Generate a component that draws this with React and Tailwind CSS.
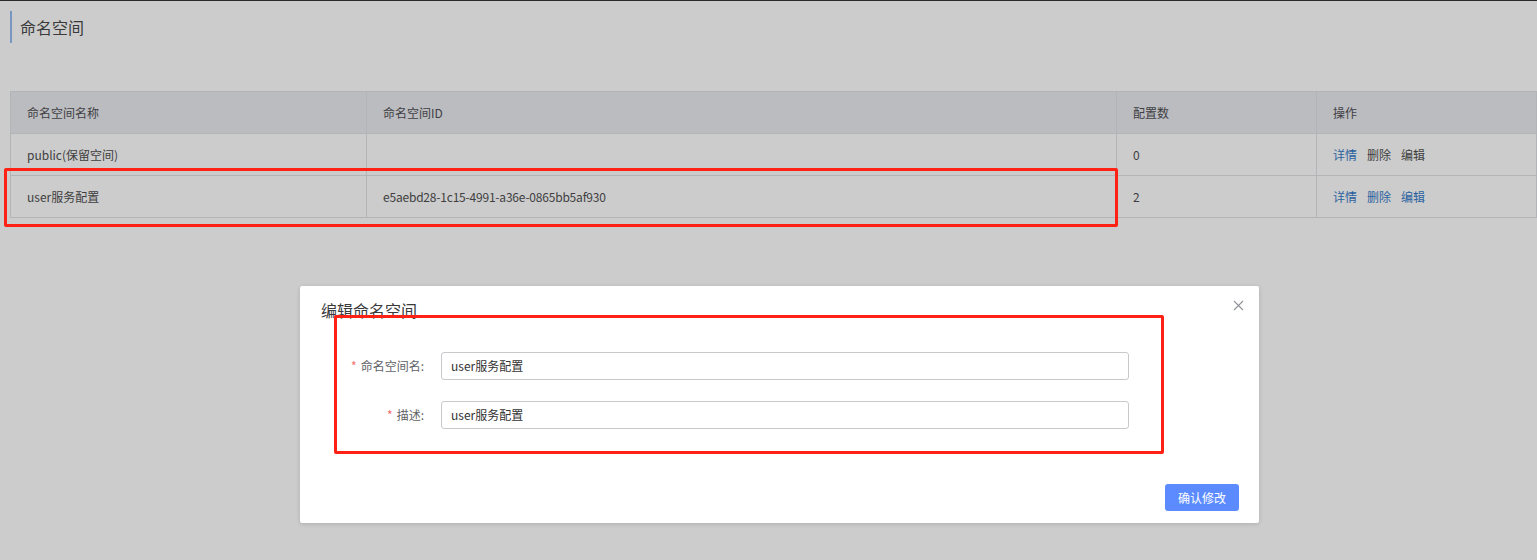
import React from 'react'
import { X } from 'lucide-react'

const rows = [
  { name: 'public(保留空间)', id: '', count: '0', dim: true },
  { name: 'user服务配置', id: 'e5aebd28-1c15-4991-a36e-0865bb5af930', count: '2', dim: false },
]

export default function App() {
  return (
    <div
      className="relative h-[560px] w-full overflow-hidden border-t border-[#2a2a2e] bg-[#cccccc] text-[12px] text-[#3e3e40]"
      style={{ fontFamily: '"Noto Sans CJK SC", "Noto Sans", sans-serif' }}
    >
      {/* page header */}
      <div className="pl-[10px] pt-[10px]">
        <div className="flex h-[32px] items-center border-l-[2px] border-[#7896bf] pl-[8px] text-[16px] text-[#3a3a3c]">
          命名空间
        </div>
      </div>

      {/* table */}
      <div className="ml-[10px] mt-[48px] w-[1527px]">
        <table className="w-full table-fixed border-collapse">
          <colgroup>
            <col className="w-[356px]" />
            <col className="w-[750px]" />
            <col className="w-[200px]" />
            <col />
          </colgroup>
          <thead>
            <tr className="h-[42px] bg-[#bbbcc0]">
              {['命名空间名称', '命名空间ID', '配置数', '操作'].map((h) => (
                <th key={h} className="border border-[#b3b4b8] pl-[16px] text-left font-normal text-[#404044]">
                  {h}
                </th>
              ))}
            </tr>
          </thead>
          <tbody>
            {rows.map((r) => (
              <tr key={r.name} className="h-[42px]">
                <td className="border border-[#b3b4b8] pl-[16px]">{r.name}</td>
                <td className="border border-[#b3b4b8] pl-[16px] tracking-[-0.2px]">{r.id}</td>
                <td className="border border-[#b3b4b8] pl-[16px]">{r.count}</td>
                <td className="border border-[#b3b4b8] pl-[16px]">
                  <div className="flex gap-[10px]">
                    <span className="text-[#2a62a0]">详情</span>
                    <span className={r.dim ? 'text-[#3e3e40]' : 'text-[#2a62a0]'}>删除</span>
                    <span className={r.dim ? 'text-[#3e3e40]' : 'text-[#2a62a0]'}>编辑</span>
                  </div>
                </td>
              </tr>
            ))}
          </tbody>
        </table>
      </div>

      {/* annotation on row */}
      <div className="pointer-events-none absolute left-[4px] top-[167px] h-[59px] w-[1114px] rounded-[2px] border-[3px] border-[#ff2114]" />

      {/* modal */}
      <div className="absolute left-[300px] top-[285px] flex h-[237px] w-[959px] flex-col rounded-[2px] bg-white shadow-[0_1px_4px_rgba(0,0,0,0.15)]">
        <div className="flex items-start justify-between pl-[21px] pr-[12px] pt-[12px]">
          <span className="text-[16px] leading-[24px] text-[#3a3a3c]">编辑命名空间</span>
          <X className="-mt-[1px] h-[17px] w-[17px] text-[#909399]" strokeWidth={1.5} />
        </div>
        <div className="mt-[30px] flex flex-col gap-[21px]">
          {[
            ['命名空间名', 'user服务配置'],
            ['描述', 'user服务配置'],
          ].map(([label, val]) => (
            <div key={label} className="flex items-center">
              <label className="w-[141px] pr-[17px] text-right text-[12px] text-[#606266]">
                <span className="mr-[4px] text-[#f56c6c]">*</span>
                {label}:
              </label>
              <div className="flex h-[28px] w-[688px] items-center rounded-[3px] border border-[#c8c9cc] pl-[9px] text-[12px] text-[#333]">
                {val}
              </div>
            </div>
          ))}
        </div>
        <div className="mt-auto flex justify-end pb-[12px] pr-[20px]">
          <button className="h-[27px] w-[74px] rounded-[3px] bg-[#5b8bff] text-[12px] text-white">确认修改</button>
        </div>
      </div>

      {/* annotation on form */}
      <div className="pointer-events-none absolute left-[334px] top-[314px] h-[139px] w-[830px] rounded-[2px] border-[3px] border-[#ff2114]" />
    </div>
  )
}
